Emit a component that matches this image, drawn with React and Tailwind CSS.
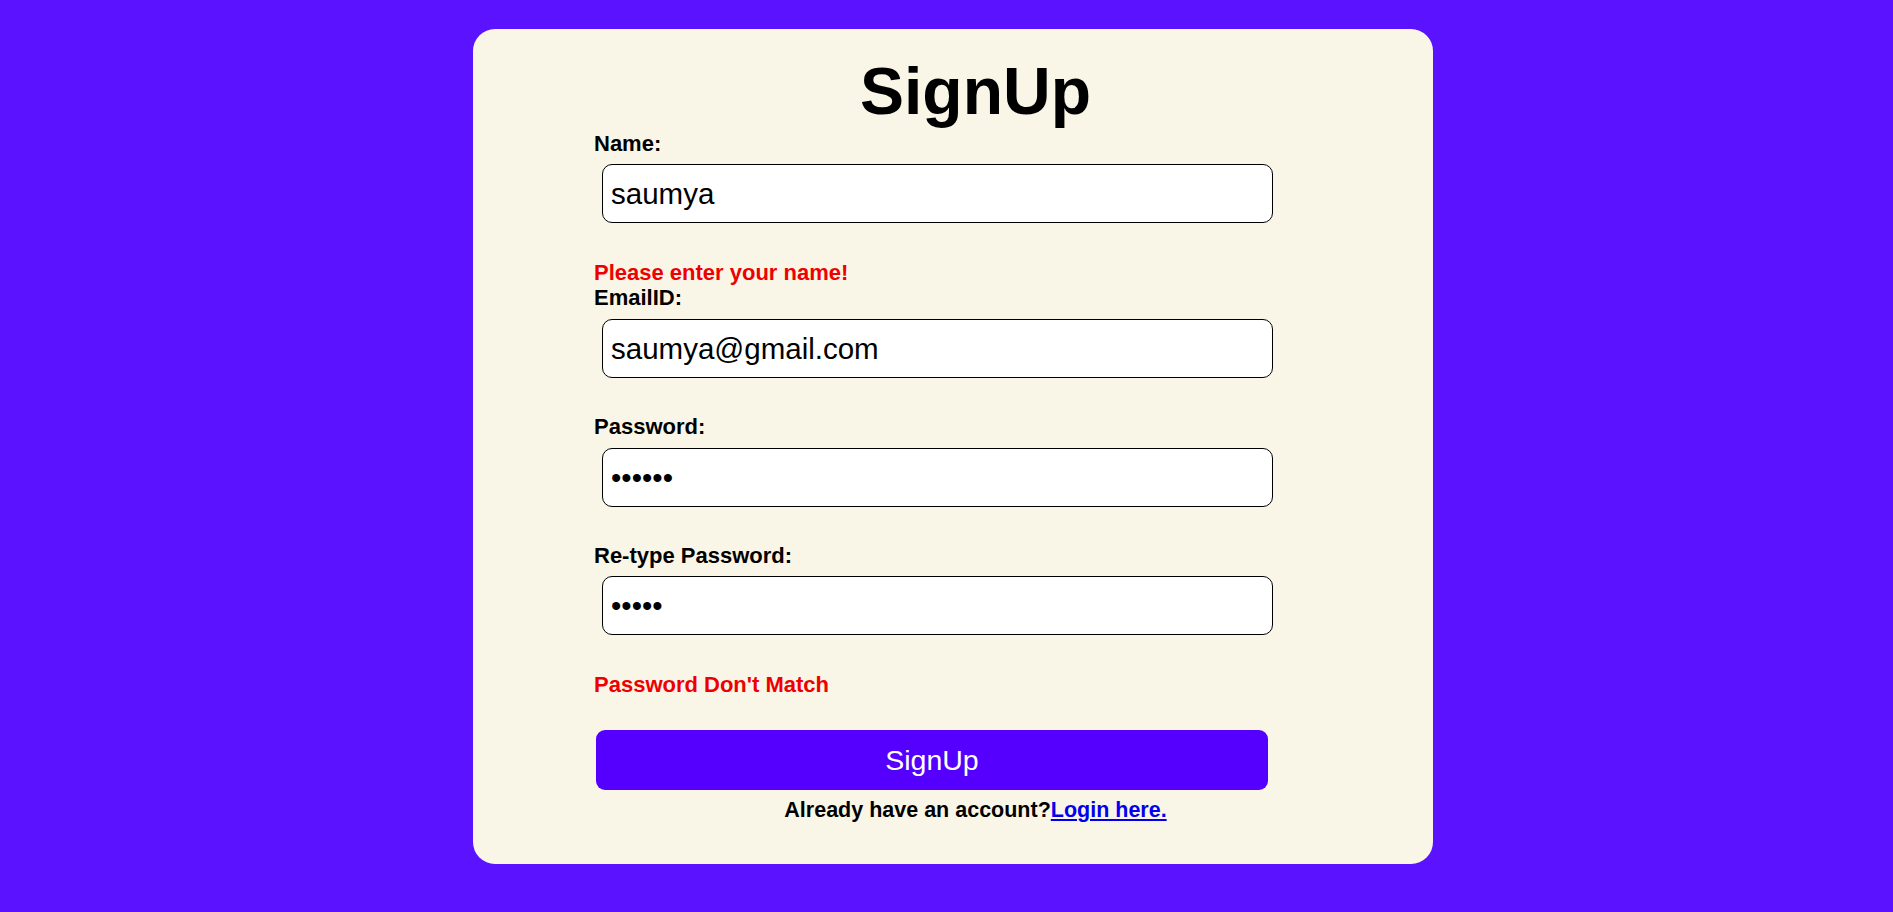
import React from "react";

const labelCls =
  "block text-[22px] leading-[25px] font-bold text-black [font-family:'Liberation_Sans',Arial,sans-serif]";
const errCls =
  "block text-[22px] leading-[25px] font-bold text-[#ee0000] [font-family:'Liberation_Sans',Arial,sans-serif]";
const inputCls =
  "block ml-[8px] w-[671px] h-[59px] bg-white border border-black rounded-[10px] pl-[8px] text-[29.5px] text-black outline-none [font-family:'Liberation_Sans',Arial,sans-serif]";

export default function App() {
  return (
    <div className="min-h-screen w-full bg-[#5a12ff] pt-[29px] pl-[13px] flex justify-center items-start">
      <div className="w-[960px] bg-[#faf6e7] rounded-[22px] pt-[24px] pb-[41px] pl-[121px]">
        <form className="w-[763px] flex flex-col" onSubmit={(e) => e.preventDefault()}>
          <h1 className="text-center text-[66px] leading-[76px] font-bold text-black [font-family:'Liberation_Sans',Arial,sans-serif]">
            SignUp
          </h1>

          <label className={labelCls + " mt-[2px]"}>Name:</label>
          <input className={inputCls + " mt-[8px]"} type="text" defaultValue="saumya" />
          <span className={errCls + " mt-[37px]"}>Please enter your name!</span>

          <label className={labelCls + " mt-0"}>EmailID:</label>
          <input className={inputCls + " mt-[9px]"} type="email" defaultValue="saumya@gmail.com" />

          <label className={labelCls + " mt-[36px]"}>Password:</label>
          <input className={inputCls + " mt-[9px]"} type="password" defaultValue="123456" />

          <label className={labelCls + " mt-[36px]"}>Re-type Password:</label>
          <input className={inputCls + " mt-[8px]"} type="password" defaultValue="12345" />

          <span className={errCls + " mt-[37px]"}>Password Don't Match</span>

          <button
            type="submit"
            className="mt-[33px] ml-[2px] w-[672px] h-[60px] bg-[#5500ff] rounded-[9px] text-white text-[28.5px] [font-family:'Liberation_Sans',Arial,sans-serif]"
          >
            SignUp
          </button>

          <p className="mt-[8px] text-center text-[21.5px] leading-[25px] font-bold text-black [font-family:'Liberation_Sans',Arial,sans-serif]">
            Already have an account?
            <a href="#" className="text-[#0000ee] underline">
              Login here.
            </a>
          </p>
        </form>
      </div>
    </div>
  );
}
